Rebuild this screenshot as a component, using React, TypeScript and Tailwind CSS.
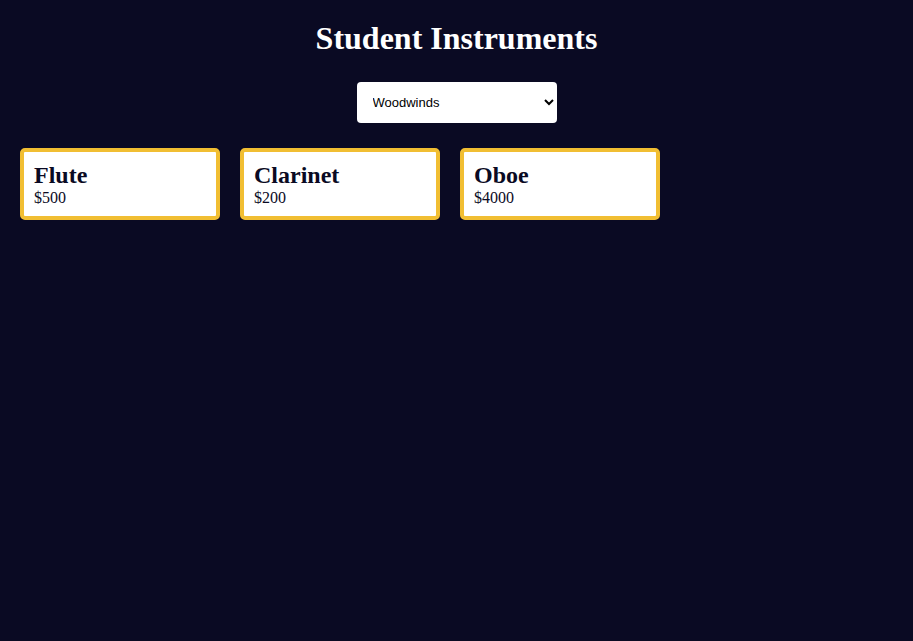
import React from "react";

const items = [
  { name: "Flute", price: "$500" },
  { name: "Clarinet", price: "$200" },
  { name: "Oboe", price: "$4000" },
];

export default function App() {
  return (
    <div className="min-h-[641px] w-full bg-[#0a0a23] font-['Liberation_Serif',serif] text-white flow-root">
      <h1 className="mt-[20px] mb-[25px] text-center text-[32px] font-bold leading-[37px]">Student Instruments</h1>
      <div className="flex justify-center">
        <select
          defaultValue="woodwinds"
          className="h-[41px] w-[200px] rounded-[4px] bg-white pl-[12px] pr-[8px] font-['Liberation_Sans',Arial,sans-serif] text-[13px] text-black"
        >
          <option value="all">All</option>
          <option value="woodwinds">Woodwinds</option>
          <option value="brass">Brass</option>
          <option value="percussion">Percussion</option>
        </select>
      </div>
      <div className="mt-[25px] flex flex-wrap gap-[20px] px-[20px]">
        {items.map((it) => (
          <div
            key={it.name}
            className="h-[72px] w-[200px] rounded-[5px] border-4 border-[#f1be32] bg-white pl-[10px] pr-[10px] pt-[10px] pb-[8px] text-[#0a0a23]"
          >
            <h2 className="text-[24px] font-bold leading-[27px]">{it.name}</h2>
            <p className="text-[16px] leading-[18px]">{it.price}</p>
          </div>
        ))}
      </div>
    </div>
  );
}
